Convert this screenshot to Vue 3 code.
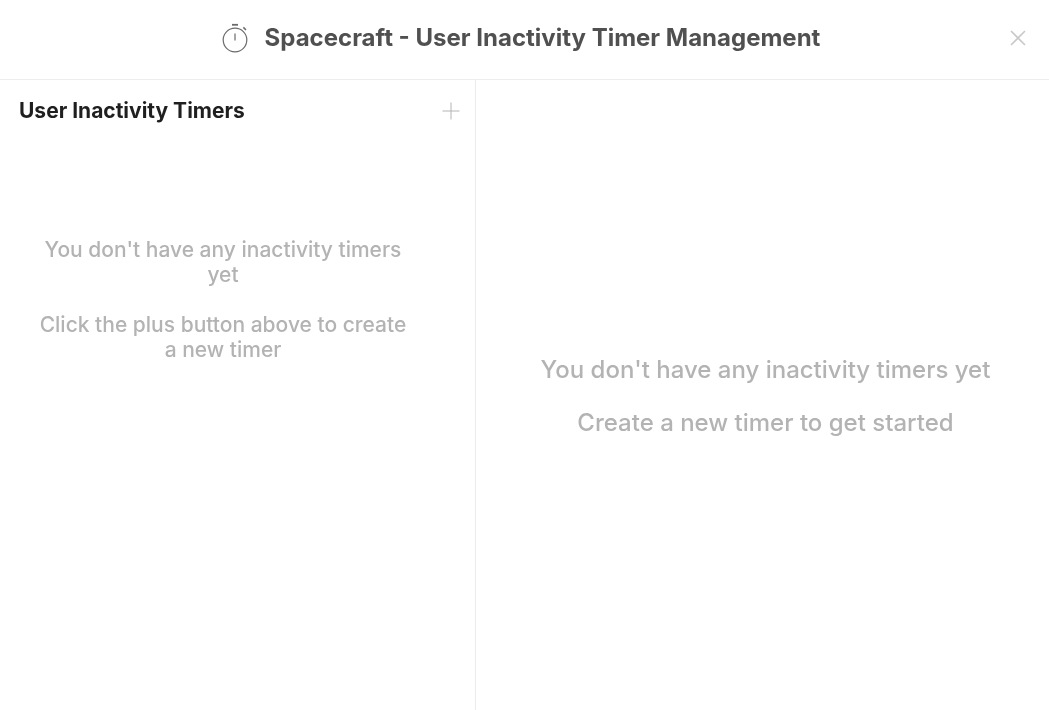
<script setup>
const timerName = 'Spacecraft - User Inactivity Timer Management'
</script>

<template>
  <div class="modal">
    <header class="modal-header">
      <div class="title-wrap">
        <svg class="stopwatch" width="28" height="32" viewBox="0 0 28 32" fill="none" stroke="#6a6a6a">
          <circle cx="14" cy="18" r="11.8" stroke-width="1.2" />
          <path d="M14 11.5V18.5" stroke-width="1.2" />
          <path d="M11 2.8H17" stroke-width="1.8" />
          <path d="M22.4 5.4L25 8" stroke-width="1.5" />
        </svg>
        <h1>{{ timerName }}</h1>
      </div>
      <button type="button" class="close-x" aria-label="Close">
        <svg width="16" height="16" viewBox="0 0 16 16" fill="none" stroke="#c8c8c8" stroke-width="1.6">
          <path d="M1 1L15 15M15 1L1 15" />
        </svg>
      </button>
    </header>

    <div class="modal-body">
      <aside class="sidebar">
        <div class="sidebar-head">
          <h2>User Inactivity Timers</h2>
          <button type="button" class="add-btn" aria-label="Add">
            <svg width="18" height="18" viewBox="0 0 18 18" fill="none" stroke="#b4b4b4" stroke-width="1">
              <path d="M9 0.5V17.5M0.5 9H17.5" />
            </svg>
          </button>
        </div>
        <div class="sidebar-empty">
          <p>You don't have any inactivity timers yet</p>
          <p>Click the plus button above to create a new timer</p>
        </div>
      </aside>

      <main class="content">
        <p class="big">You don't have any inactivity timers yet</p>
        <p class="big">Create a new timer to get started</p>
      </main>
    </div>
  </div>
</template>

<style>
html, body {
  margin: 0;
  background: #fff;
}
</style>

<style scoped>
.modal {
  width: 1049px;
  height: 710px;
  display: flex;
  flex-direction: column;
  font-family: Inter, "Liberation Sans", sans-serif;
  overflow: hidden;
  will-change: transform;
}

.modal-header {
  height: 79px;
  flex-shrink: 0;
  border-bottom: 1px solid #ececec;
  display: flex;
  align-items: center;
  justify-content: center;
  position: relative;
}

.title-wrap {
  display: flex;
  align-items: center;
  gap: 16px;
  padding-right: 8px;
  margin-bottom: 4px;
}

.stopwatch {
  flex-shrink: 0;
}

h1 {
  margin: 0;
  font-size: 24px;
  font-weight: 700;
  color: #505050;
}

.close-x {
  position: absolute;
  right: 23px;
  top: 30px;
  background: none;
  border: none;
  padding: 0;
  line-height: 0;
}

.modal-body {
  flex: 1;
  display: flex;
  min-height: 0;
}

.sidebar {
  width: 475px;
  flex-shrink: 0;
  border-right: 1px solid #ececec;
}

.sidebar-head {
  display: flex;
  align-items: center;
  justify-content: space-between;
  padding: 18px 15px 0 19px;
}

.sidebar-head h2 {
  margin: 0;
  font-size: 21px;
  font-weight: 700;
  color: #1f1f1f;
}

.add-btn {
  background: none;
  border: none;
  padding: 0;
  line-height: 0;
}

.sidebar-empty {
  width: 384px;
  margin: 114px 0 0 31px;
  text-align: center;
  font-size: 21px;
  font-weight: 500;
  line-height: 25px;
  color: #b3b3b3;
}

.sidebar-empty p {
  margin: 0 0 25px;
}

.content {
  flex: 1;
  display: flex;
  flex-direction: column;
  align-items: center;
  padding: 275px 0 0 6px;
}

.big {
  margin: 0 0 24px;
  font-size: 24px;
  font-weight: 500;
  line-height: 29px;
  color: #b3b3b3;
}
</style>
